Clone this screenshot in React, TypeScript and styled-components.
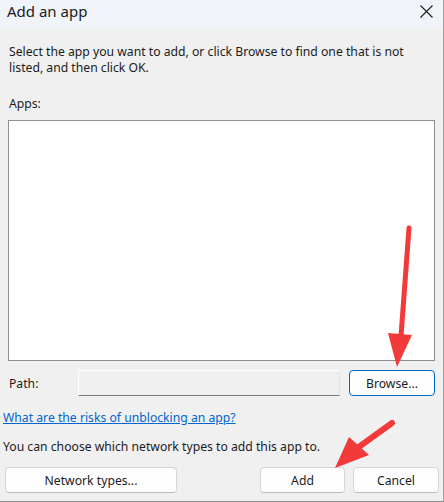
import styled, { createGlobalStyle } from "styled-components";

const GlobalStyle = createGlobalStyle`
  html, body {
    margin: 0;
    padding: 0;
    background: #f0f0f0;
  }
  body {
    font-family: "Noto Sans", "Open Sans", sans-serif;
    color: #1b1b1b;
  }
`;

const Window = styled.div`
  position: relative;
  width: 443px;
  height: 501px;
  display: flex;
  flex-direction: column;
  background: #f0f0f0;
  border-right: 1px solid #a0a0a0;
  border-bottom: 1px solid #8a8a8a;
  overflow: hidden;
`;

const TitleBar = styled.div`
  height: 28px;
  box-sizing: border-box;
  display: flex;
  align-items: flex-start;
  justify-content: space-between;
  padding: 1px 10px 0 7px;
  background: #f0f4f9;
`;

const Title = styled.span`
  font-size: 15px;
  line-height: 20px;
  color: #1a1a1a;
`;

const CloseSvg = styled.svg`
  margin-top: 4px;
`;

const Body = styled.div`
  flex: 1;
  display: flex;
  flex-direction: column;
  padding: 16px 0 0 0;
`;

const Text = styled.p<{ $indent?: number }>`
  margin: 0;
  padding-left: ${({ $indent }) => $indent ?? 9}px;
  font-size: 12.2px;
  line-height: 16px;
`;

const Label = styled(Text)`
  margin-top: 20px;
`;

const ListBox = styled.div`
  margin: 8px 8px 0 8px;
  height: 239px;
  background: #ffffff;
  border: 1px solid #8e8f8f;
`;

const PathRow = styled.div`
  display: flex;
  align-items: center;
  margin-top: 9px;
  padding: 0 8px 0 9px;
  height: 26px;
`;

const PathLabel = styled.span`
  width: 69px;
  font-size: 12.2px;
`;

const PathInput = styled.div`
  width: 260px;
  height: 24px;
  border: 1px solid #ffffff;
  border-bottom: 1px solid #7a7a7a;
  border-right: 1px solid #e2e2e2;
  background: #efefef;
`;

const Button = styled.button<{ $primary?: boolean; $w: number }>`
  width: ${({ $w }) => $w}px;
  height: 26px;
  box-sizing: border-box;
  font-family: "Noto Sans", "Open Sans", sans-serif;
  font-size: 12.2px;
  color: #1b1b1b;
  background: #fdfdfd;
  border: 1px solid ${({ $primary }) => ($primary ? "#0067c0" : "#d4d4d4")};
  border-bottom-color: ${({ $primary }) => ($primary ? "#0067c0" : "#bdbdbd")};
  border-radius: 4px;
  padding: 0;
`;

const BrowseButton = styled(Button)`
  margin-left: auto;
`;

const Link = styled.a`
  margin-top: 14px;
  padding-left: 3px;
  font-size: 12.2px;
  line-height: 16px;
  color: #0066cc;
  text-decoration: underline;
`;

const Note = styled(Text)`
  margin-top: 13px;
`;

const Footer = styled.div`
  display: flex;
  gap: 8px;
  margin-top: 12px;
  padding: 0 4px 0 5px;
`;

const Spacer = styled.div`
  flex: 1;
`;

const Arrows = styled.svg`
  position: absolute;
  left: 0;
  top: 0;
  pointer-events: none;
`;

const CloseIcon = () => (
  <CloseSvg width="13" height="13" viewBox="0 0 13 13">
    <path d="M0.5 0.5 L12.5 12.5 M12.5 0.5 L0.5 12.5" stroke="#1a1a1a" strokeWidth="1.1" />
  </CloseSvg>
);

export default function App() {
  return (
    <>
      <GlobalStyle />
      <Window>
        <TitleBar>
          <Title>Add an app</Title>
          <CloseIcon />
        </TitleBar>
        <Body>
          <Text>
            Select the app you want to add, or click Browse to find one that is not
            <br />
            listed, and then click OK.
          </Text>
          <Label>Apps:</Label>
          <ListBox />
          <PathRow>
            <PathLabel>Path:</PathLabel>
            <PathInput />
            <BrowseButton $primary $w={86}>
              Browse...
            </BrowseButton>
          </PathRow>
          <Link href="#">What are the risks of unblocking an app?</Link>
          <Note $indent={3}>You can choose which network types to add this app to.</Note>
          <Footer>
            <Button $w={172}>Network types...</Button>
            <Spacer />
            <Button $w={85}>Add</Button>
            <Button $w={86}>Cancel</Button>
          </Footer>
        </Body>
        <Arrows width="444" height="502" viewBox="0 0 444 502">
          <line x1="409" y1="228" x2="401" y2="336" stroke="#f23a3a" strokeWidth="5" strokeLinecap="round" />
          <polygon points="388,333 412,335 397,367" fill="#f23a3a" />
          <line x1="392" y1="423" x2="356" y2="449" stroke="#f23a3a" strokeWidth="6" strokeLinecap="round" />
          <polygon points="349,437 369,455 335,468" fill="#f23a3a" />
        </Arrows>
      </Window>
    </>
  );
}
